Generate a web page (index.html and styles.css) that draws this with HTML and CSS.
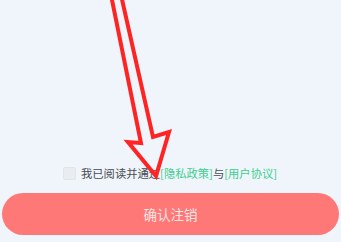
FILE: index.html
```html
<!DOCTYPE html>
<html lang="zh">
<head>
<meta charset="utf-8">
<link rel="stylesheet" href="styles.css">
</head>
<body>
<div class="page">
  <div class="spacer"></div>
  <div class="agree">
    <span class="box"></span>
    <span class="txt">我已阅读并通过<span class="link">[隐私政策]</span>与<span class="link">[用户协议]</span></span>
  </div>
  <button class="confirm">确认注销</button>
  <svg class="arrow" width="341" height="242" viewBox="0 0 341 242">
    <polyline points="111,-5 141,143 128,142 156,176 169,132 153,137 121,-5" fill="none" stroke="#ff2424" stroke-width="4" stroke-linejoin="miter"/>
  </svg>
</div>
</body>
</html>
```

FILE: styles.css
```css
html, body {
  margin: 0;
  padding: 0;
  background: #eff5fb;
}
.page {
  position: relative;
  width: 341px;
  height: 242px;
  display: flex;
  flex-direction: column;
  overflow: hidden;
  font-family: "Noto Sans CJK SC", "Noto Sans", sans-serif;
}
.spacer {
  flex: 1;
}
.agree {
  display: flex;
  align-items: center;
  margin-left: 63px;
  height: 14px;
}
.box {
  width: 11px;
  height: 11px;
  border: 1px solid #e2e5e8;
  background: #eaedf0;
  border-radius: 2px;
  margin-right: 5px;
}
.txt {
  font-size: 11.3px;
  line-height: 14px;
  color: #4a4d52;
  white-space: nowrap;
}
.link {
  color: #3fce8f;
}
.confirm {
  margin: 13px 2px 7px 2px;
  height: 42px;
  border: none;
  border-radius: 21px;
  background: #ff7878;
  color: #fde4e4;
  font-family: "Noto Sans CJK SC", "Noto Sans", sans-serif;
  font-size: 13.5px;
  padding: 0;
}
.arrow {
  position: absolute;
  left: 0;
  top: 0;
}
```
